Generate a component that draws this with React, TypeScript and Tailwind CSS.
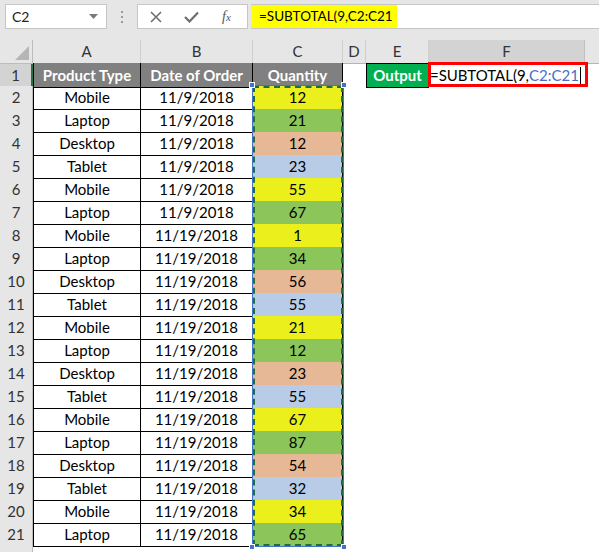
const rows = [
  { p: "Mobile", d: "11/9/2018", q: 12 },
  { p: "Laptop", d: "11/9/2018", q: 21 },
  { p: "Desktop", d: "11/9/2018", q: 12 },
  { p: "Tablet", d: "11/9/2018", q: 23 },
  { p: "Mobile", d: "11/9/2018", q: 55 },
  { p: "Laptop", d: "11/9/2018", q: 67 },
  { p: "Mobile", d: "11/19/2018", q: 1 },
  { p: "Laptop", d: "11/19/2018", q: 34 },
  { p: "Desktop", d: "11/19/2018", q: 56 },
  { p: "Tablet", d: "11/19/2018", q: 55 },
  { p: "Mobile", d: "11/19/2018", q: 21 },
  { p: "Laptop", d: "11/19/2018", q: 12 },
  { p: "Desktop", d: "11/19/2018", q: 23 },
  { p: "Tablet", d: "11/19/2018", q: 55 },
  { p: "Mobile", d: "11/19/2018", q: 67 },
  { p: "Laptop", d: "11/19/2018", q: 87 },
  { p: "Desktop", d: "11/19/2018", q: 54 },
  { p: "Tablet", d: "11/19/2018", q: 32 },
  { p: "Mobile", d: "11/19/2018", q: 34 },
  { p: "Laptop", d: "11/19/2018", q: 65 },
];

const fills: Record<string, string> = {
  Mobile: "bg-[#ebf01c]",
  Laptop: "bg-[#8cc65a]",
  Desktop: "bg-[#e6b896]",
  Tablet: "bg-[#b8cce8]",
};

const COLS = "grid grid-cols-[33px_108px_112px_90px_23px_63px_156px_14px]";
const rowHead = "flex items-center justify-center bg-[#e6e6e6] border-r border-b border-r-[#bcbcbc] border-b-[#d4d4d4] text-[#333]";
const tableCell = "flex items-center justify-center border-r border-b border-black";

function Toolbar() {
  return (
    <div className="h-[40px] bg-[#e6e6e6] flex items-start pt-[4px]">
      {/* name box */}
      <div className="ml-[5px] w-[102px] h-[25px] bg-white border border-[#c6c6c6] flex items-center justify-between pl-[6px] pr-[8px]">
        <span className="text-[14px] text-[#222]">C2</span>
        <svg width="9" height="5" viewBox="0 0 9 5">
          <polygon points="0,0 9,0 4.5,5" fill="#7a7a7a" />
        </svg>
      </div>
      <div className="w-[30px] h-[25px] flex flex-col items-center justify-center gap-[3px]">
        <span className="w-[2px] h-[2px] bg-[#9a9a9a]" />
        <span className="w-[2px] h-[2px] bg-[#9a9a9a]" />
        <span className="w-[2px] h-[2px] bg-[#9a9a9a]" />
      </div>
      {/* cancel / enter / fx */}
      <div className="w-[111px] h-[25px] bg-white border border-[#c6c6c6] flex items-center">
        <svg className="ml-[12px]" width="12" height="12" viewBox="0 0 12 12">
          <path d="M1 1 L11 11 M11 1 L1 11" stroke="#6e6e6e" strokeWidth="1.6" />
        </svg>
        <svg className="ml-[22px]" width="15" height="12" viewBox="0 0 15 12">
          <path d="M1 6 L5.5 10.5 L14 1.5" stroke="#6e6e6e" strokeWidth="2.2" fill="none" />
        </svg>
        <span className="ml-[23px] font-[family-name:'Liberation_Serif',serif] italic text-[14px] text-[#555] leading-none">
          f<span className="text-[11px]">x</span>
        </span>
      </div>
      {/* formula bar */}
      <div className="ml-[3px] flex-1 h-[25px] bg-white border-y border-[#c6c6c6] flex">
        <div className="w-[146px] h-full bg-[#ffff00] flex items-center pl-[8px] text-[13.5px] text-black">
          =SUBTOTAL(9,C2:C21
        </div>
      </div>
    </div>
  );
}

export default function App() {
  return (
    <div className="w-[599px] h-[552px] overflow-hidden bg-white font-[family-name:Lato,'Liberation_Sans',sans-serif] text-[15px] text-black">
      <Toolbar />
      <div className="relative">
        {/* column headers */}
        <div className={`${COLS} h-[23px]`}>
          <div className="relative bg-[#e6e6e6] border-r border-b border-[#bcbcbc]">
            <svg className="absolute right-[3px] bottom-[3px]" width="14" height="14" viewBox="0 0 14 14">
              <polygon points="14,0 14,14 0,14" fill="#b5b5b5" />
            </svg>
          </div>
          {["A", "B", "C", "D", "E"].map((c) => (
            <div key={c} className="flex items-center justify-center bg-[#e6e6e6] border-r border-b border-r-[#cfcfcf] border-b-[#b5b5b5] text-[#333]">
              {c}
            </div>
          ))}
          <div className="flex items-center justify-center bg-[#d3d3d3] border-r border-b border-r-[#c0c0c0] border-b-[#a9a9a9] text-[#333]">F</div>
          <div className="bg-[#e6e6e6] border-b border-b-[#b5b5b5]" />
        </div>

        {/* row 1 */}
        <div className={`${COLS} h-[23px]`}>
          <div className="flex items-center justify-center bg-[#d3d3d3] border-b border-b-[#c8c8c8] border-r-2 border-r-[#217346] text-[#333]">1</div>
          <div className={`${tableCell} border-l bg-[#808080] text-white font-bold`}>Product Type</div>
          <div className={`${tableCell} bg-[#808080] text-white font-bold`}>Date of Order</div>
          <div className={`${tableCell} bg-[#808080] text-white font-bold`}>Quantity</div>
          <div />
          <div className="flex items-center justify-center bg-[#00b050] border border-black text-white font-bold">Output</div>
          <div className="relative flex items-center pl-[1px] whitespace-nowrap">
            <span>=SUBTOTAL(9,</span>
            <span className="text-[#4472c4]">C2:C21</span>
            <span className="ml-[1px] w-[1px] h-[17px] bg-black" />
            <div className="absolute -left-[1px] -top-[1px] w-[160px] h-[25px] border-[3px] border-[#ff0000]" />
          </div>
          <div />
        </div>

        {/* data rows */}
        {rows.map((r, i) => (
          <div key={i} className={`${COLS} h-[23px]`}>
            <div className={rowHead}>{i + 2}</div>
            <div className={`${tableCell} border-l`}>{r.p}</div>
            <div className={tableCell}>{r.d}</div>
            <div className={`${tableCell} ${fills[r.p]}`}>{r.q}</div>
            <div />
            <div />
            <div />
            <div />
          </div>
        ))}

        {/* row 22, only its top edge shows */}
        <div className={`${COLS} h-[23px]`}>
          <div className={rowHead} />
        </div>

        {/* referenced range C2:C21 */}
        <div className="absolute left-[252px] top-[45px] w-[92px] h-[462px] border border-[#4472c4]">
          <div className="w-full h-full border-2 border-dashed border-[#1f6e43]" />
          <span className="absolute -left-[4px] -top-[4px] w-[6px] h-[6px] bg-[#4472c4] border border-white" />
          <span className="absolute -right-[4px] -top-[4px] w-[6px] h-[6px] bg-[#4472c4] border border-white" />
          <span className="absolute -left-[4px] -bottom-[4px] w-[6px] h-[6px] bg-[#4472c4] border border-white" />
          <span className="absolute -right-[4px] -bottom-[4px] w-[6px] h-[6px] bg-[#4472c4] border border-white" />
        </div>
      </div>
    </div>
  );
}
